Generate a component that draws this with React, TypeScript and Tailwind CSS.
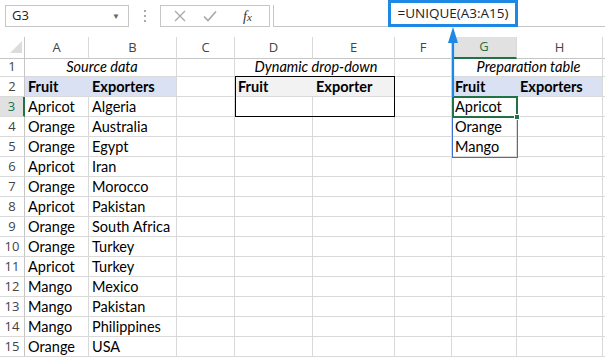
import React from 'react'

const COLS = 'grid grid-cols-[25px_64px_88px_58px_78px_82px_57px_65px_86px_2px]'
const cellFont = "font-['Lato',sans-serif] text-[14.5px] text-black"

const data: [string, string, string?][] = [
  ['Apricot', 'Algeria', 'Apricot'],
  ['Orange', 'Australia', 'Orange'],
  ['Orange', 'Egypt', 'Mango'],
  ['Apricot', 'Iran'],
  ['Orange', 'Morocco'],
  ['Apricot', 'Pakistan'],
  ['Orange', 'South Africa'],
  ['Orange', 'Turkey'],
  ['Apricot', 'Turkey'],
  ['Mango', 'Mexico'],
  ['Mango', 'Pakistan'],
  ['Mango', 'Philippines'],
  ['Orange', 'USA'],
]

interface CellProps {
  children?: React.ReactNode
  className?: string
  noRight?: boolean
}

const Cell = ({ children, className = '', noRight }: CellProps) => (
  <div
    className={`h-[20px] border-b border-[#d9d9d9] ${noRight ? '' : 'border-r'} flex items-center pl-[3px] pt-[1px] whitespace-nowrap overflow-visible ${cellFont} ${className}`}
  >
    {children}
  </div>
)

const RowNum = ({ n, active }: { n: number; active?: boolean }) => (
  <div
    className={`h-[20px] border-b border-[#d9d9d9] flex items-center justify-center font-['Open_Sans',sans-serif] text-[13px] ${
      active ? 'bg-[#e1e1e1] text-[#217346] border-r-2 border-r-[#217346]' : 'text-[#444] border-r border-r-[#c6c6c6]'
    }`}
  >
    {n}
  </div>
)

export default function App() {
  const headers = ['A', 'B', 'C', 'D', 'E', 'F', 'G', 'H']
  return (
    <div className="relative w-[605px] h-[357px] overflow-hidden bg-white">
      {/* Toolbar */}
      <div className="h-[37px] flex items-start pt-[5px]">
        <div className="ml-[5px] w-[124px] h-[22px] border border-[#c6c6c6] flex items-center justify-between pl-[6px] pr-[8px] font-['Open_Sans',sans-serif] text-[13px] text-[#222]">
          <span>G3</span>
          <span className="text-[8px] text-[#666]">▼</span>
        </div>
        <div className="w-[31px] h-[22px] flex flex-col items-center justify-center gap-[3px]">
          <span className="w-[2px] h-[2px] bg-[#aaa]" />
          <span className="w-[2px] h-[2px] bg-[#aaa]" />
          <span className="w-[2px] h-[2px] bg-[#aaa]" />
        </div>
        <div className="w-[110px] h-[22px] border border-[#c6c6c6] flex items-center">
          <svg width="12" height="12" viewBox="0 0 12 12" className="ml-[13px]">
            <path d="M1 1L11 11M11 1L1 11" stroke="#a8a8a8" strokeWidth="1.3" />
          </svg>
          <svg width="14" height="12" viewBox="0 0 14 12" className="ml-[17px]">
            <path d="M1 6.5L5 10.5L13 1.5" stroke="#a8a8a8" strokeWidth="1.6" fill="none" />
          </svg>
          <span className="ml-[26px] font-['Liberation_Serif',serif] italic text-[14px] text-[#333]">
            f<span className="text-[11px]">x</span>
          </span>
        </div>
        <div className="ml-[3px] flex-1 h-[22px] border-l border-b border-[#c6c6c6]" />
      </div>

      {/* Column headers */}
      <div className={`${COLS} h-[20px]`}>
        <div className="relative border-r border-b border-[#c6c6c6]">
          <svg width="12" height="12" viewBox="0 0 12 12" className="absolute left-[10px] top-[4px]">
            <path d="M12 0V12H0Z" fill="#dcdcdc" />
          </svg>
        </div>
        {headers.map((h) => (
          <div
            key={h}
            className={`flex items-center justify-center font-['Open_Sans',sans-serif] text-[13px] border-r border-r-[#d9d9d9] ${
              h === 'G'
                ? 'bg-[#e1e1e1] text-[#217346] border-b-2 border-b-[#217346]'
                : 'text-[#444] border-b border-b-[#c6c6c6]'
            }`}
          >
            {h}
          </div>
        ))}
        <div className="border-b border-[#c6c6c6]" />
      </div>

      {/* Row 1 */}
      <div className={COLS}>
        <RowNum n={1} />
        <Cell className="col-span-2 justify-center italic pl-0">Source data</Cell>
        <Cell />
        <Cell className="col-span-2 justify-center italic pl-0">Dynamic drop-down</Cell>
        <Cell />
        <Cell className="col-span-2 justify-center italic pl-0">Preparation table</Cell>
        <Cell />
      </div>

      {/* Row 2 */}
      <div className={COLS}>
        <RowNum n={2} />
        <Cell noRight className="bg-[#d9e1f2] font-bold">Fruit</Cell>
        <Cell className="bg-[#d9e1f2] font-bold">Exporters</Cell>
        <Cell />
        <Cell noRight className="bg-[#f2f2f2] font-bold">Fruit</Cell>
        <Cell className="bg-[#f2f2f2] font-bold">Exporter</Cell>
        <Cell />
        <Cell noRight className="bg-[#d9e1f2] font-bold">Fruit</Cell>
        <Cell className="bg-[#d9e1f2] font-bold">Exporters</Cell>
        <Cell />
      </div>

      {/* Rows 3-15 */}
      {data.map(([fruit, country, prep], i) => (
        <div key={i} className={COLS}>
          <RowNum n={i + 3} active={i === 0} />
          <Cell>{fruit}</Cell>
          <Cell>{country}</Cell>
          <Cell />
          <Cell />
          <Cell />
          <Cell />
          <Cell>{prep}</Cell>
          <Cell />
          <Cell />
        </div>
      ))}

      {/* D2:E3 box */}
      <div className="absolute left-[235px] top-[76px] w-[160px] h-[41px] border border-black pointer-events-none" />

      {/* G3:G5 range */}
      <div className="absolute left-[452px] top-[97px] w-[66px] h-[61px] border border-[#3c6fd1] pointer-events-none" />
      {/* G3 selection */}
      <div className="absolute left-[452px] top-[96px] w-[66px] h-[22px] border-2 border-[#217346] pointer-events-none" />
      <div className="absolute left-[514px] top-[114px] w-[6px] h-[6px] bg-[#217346] border border-white pointer-events-none" />

      {/* Formula callout */}
      <div className="absolute left-[388px] top-0 w-[130px] h-[27px] border-[3px] border-[#1e88e5] bg-white flex items-center justify-center font-['Open_Sans',sans-serif] text-[13.5px] text-[#222]">
        =UNIQUE(A3:A15)
      </div>
      <svg width="14" height="72" viewBox="0 0 14 72" className="absolute left-[446px] top-[26px] pointer-events-none">
        <path d="M7 1L12 17H2Z" fill="#1e88e5" />
        <path d="M7 15V71" stroke="#1e88e5" strokeWidth="2.2" />
      </svg>
    </div>
  )
}
